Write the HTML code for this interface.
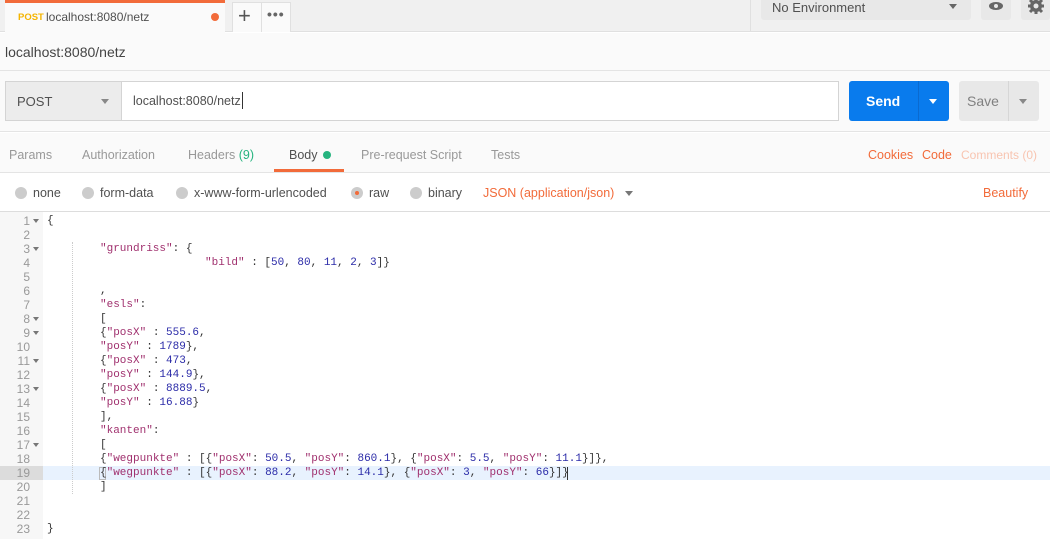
<!DOCTYPE html>
<html><head><meta charset="utf-8"><style>
*{margin:0;padding:0;box-sizing:border-box}
body{width:1050px;height:539px;overflow:hidden;background:#fff;font-family:"Liberation Sans",sans-serif;font-size:12.5px;color:#505050;position:relative}
.abs{position:absolute}
.s{color:#a0306e}.n{color:#2b2ba8}
.ln{position:absolute;left:0;width:30px;text-align:right;font-family:"Liberation Sans",sans-serif;font-size:12px;color:#999;margin-top:1px}
.cl{position:absolute;white-space:pre;font-family:"Liberation Mono",monospace;font-size:11px;color:#333;margin-top:2px}
.ar{position:absolute;left:33px;width:0;height:0;border-left:3px solid transparent;border-right:3px solid transparent;border-top:4px solid #777;margin-top:-2px}
.radio{position:absolute;top:187px;width:12px;height:12px;border-radius:50%;background:#ccc}
.tab{position:absolute;top:148px;color:#999;font-size:12.5px}
</style></head><body>
<!-- top bar -->
<div class="abs" style="left:0;top:0;width:1050px;height:32px;background:#f0f0f0;border-bottom:1px solid #e0e0e0"></div>
<div class="abs" style="left:5px;top:0;width:220px;height:33px;background:#fafafa;border-top:3px solid #f26b3a"></div>
<div class="abs" style="left:18px;top:12px;font-size:9.5px;font-weight:bold;color:#f4b400">POST</div>
<div class="abs" style="left:46px;top:10px;font-size:12px;color:#505050">localhost:8080/netz</div>
<div class="abs" style="left:211px;top:13px;width:8px;height:8px;border-radius:50%;background:#f26b3a"></div>
<div class="abs" style="left:232px;top:2px;width:59px;height:30px;background:#fafafa;border:1px solid #e0e0e0;border-bottom:none"></div>
<div class="abs" style="left:261px;top:2px;width:1px;height:30px;background:#e0e0e0"></div>
<div class="abs" style="left:238px;top:3px;font-size:22px;color:#555">+</div>
<div class="abs" style="left:267px;top:6px;font-size:14px;color:#666;letter-spacing:1px;font-weight:bold">•••</div>
<div class="abs" style="left:750px;top:0;width:1px;height:32px;background:#e0e0e0"></div>
<div class="abs" style="left:761px;top:0;width:210px;height:20px;background:#e8e8e8;border-radius:0 0 3px 3px"></div>
<div class="abs" style="left:772px;top:0;font-size:13px;color:#505050">No Environment</div>
<div class="abs" style="left:949px;top:4px;border-left:4px solid transparent;border-right:4px solid transparent;border-top:5px solid #666"></div>
<div class="abs" style="left:981px;top:0;width:30px;height:20px;background:#e8e8e8;border-radius:0 0 3px 3px"></div>
<svg class="abs" style="left:987px;top:0" width="18" height="14"><ellipse cx="9" cy="6" rx="7" ry="4" fill="#666"/><circle cx="9" cy="6" r="2" fill="#e8e8e8"/></svg>
<div class="abs" style="left:1021px;top:0;width:29px;height:20px;background:#e8e8e8;border-radius:0 0 3px 3px"></div>
<svg class="abs" style="left:1027px;top:-3px" width="18" height="18"><circle cx="9" cy="9" r="6" fill="#666"/><g stroke="#666" stroke-width="3"><line x1="9" y1="1" x2="9" y2="17"/><line x1="1" y1="9" x2="17" y2="9"/><line x1="3" y1="3" x2="15" y2="15"/><line x1="15" y1="3" x2="3" y2="15"/></g><circle cx="9" cy="9" r="2.5" fill="#e8e8e8"/></svg>
<!-- title row -->
<div class="abs" style="left:0;top:33px;width:1050px;height:38px;background:#fafafa;border-bottom:1px solid #e4e4e4"></div>
<div class="abs" style="left:5px;top:44px;font-size:14px;color:#444">localhost:8080/netz</div>
<!-- url row -->
<div class="abs" style="left:0;top:71px;width:1050px;height:61px;background:#fafafa;border-bottom:1px solid #e4e4e4"></div>
<div class="abs" style="left:5px;top:81px;width:834px;height:40px;border:1px solid #d4d4d4;background:#fff"></div>
<div class="abs" style="left:6px;top:82px;width:116px;height:38px;background:#ececec;border-right:1px solid #d4d4d4"></div>
<div class="abs" style="left:17px;top:94px;font-size:13px;color:#505050">POST</div>
<div class="abs" style="left:101px;top:99px;border-left:4px solid transparent;border-right:4px solid transparent;border-top:5px solid #888"></div>
<div class="abs" style="left:133px;top:94px;font-size:12.5px;color:#505050">localhost:8080/netz</div>
<div class="abs" style="left:242px;top:92px;width:1px;height:17px;background:#333"></div>
<div class="abs" style="left:849px;top:81px;width:100px;height:40px;background:#097bed;border-radius:3px"></div>
<div class="abs" style="left:918px;top:81px;width:1px;height:40px;background:#0a6ad0"></div>
<div class="abs" style="left:866px;top:93px;font-size:14px;font-weight:bold;color:#fff">Send</div>
<div class="abs" style="left:929px;top:99px;border-left:4px solid transparent;border-right:4px solid transparent;border-top:5px solid #fff"></div>
<div class="abs" style="left:959px;top:81px;width:80px;height:40px;background:#e8e8e8;border-radius:3px"></div>
<div class="abs" style="left:1008px;top:81px;width:1px;height:40px;background:#d6d6d6"></div>
<div class="abs" style="left:967px;top:93px;font-size:14px;color:#808080">Save</div>
<div class="abs" style="left:1019px;top:99px;border-left:4px solid transparent;border-right:4px solid transparent;border-top:5px solid #888"></div>
<!-- tabs -->
<div class="abs" style="left:0;top:133px;width:1050px;height:40px;background:#fafafa;border-bottom:1px solid #e4e4e4"></div>
<div class="tab" style="left:9px">Params</div>
<div class="tab" style="left:82px">Authorization</div>
<div class="tab" style="left:188px">Headers <span style="color:#26b47f">(9)</span></div>
<div class="tab" style="left:289px;color:#505050">Body</div>
<div class="abs" style="left:323px;top:151px;width:8px;height:8px;border-radius:50%;background:#26b47f"></div>
<div class="abs" style="left:274px;top:169px;width:70px;height:3px;background:#f26b3a"></div>
<div class="tab" style="left:361px">Pre-request Script</div>
<div class="tab" style="left:491px">Tests</div>
<div class="tab" style="left:868px;color:#f26b3a">Cookies</div>
<div class="tab" style="left:922px;color:#f26b3a">Code</div>
<div class="tab" style="left:961px;color:#f8c4b0;font-size:12px">Comments (0)</div>
<!-- radio row -->
<div class="radio" style="left:15px"></div><div class="abs" style="left:33px;top:186px">none</div>
<div class="radio" style="left:82px"></div><div class="abs" style="left:100px;top:186px">form-data</div>
<div class="radio" style="left:176px"></div><div class="abs" style="left:194px;top:186px">x-www-form-urlencoded</div>
<div class="radio" style="left:351px"></div><div class="abs" style="left:355px;top:191px;width:4px;height:4px;border-radius:50%;background:#f26b3a"></div><div class="abs" style="left:369px;top:186px">raw</div>
<div class="radio" style="left:410px"></div><div class="abs" style="left:428px;top:186px">binary</div>
<div class="abs" style="left:483px;top:186px;color:#f26b3a">JSON (application/json)</div>
<div class="abs" style="left:625px;top:191px;border-left:4px solid transparent;border-right:4px solid transparent;border-top:5px solid #777"></div>
<div class="abs" style="left:983px;top:186px;color:#f26b3a">Beautify</div>
<!-- editor -->
<div class="abs" style="left:0;top:211px;width:1050px;height:1px;background:#ddd"></div>
<div class="abs" style="left:0;top:212px;width:43px;height:327px;background:#f7f7f7"></div>
<div class="abs" style="left:43px;top:466px;width:1007px;height:14px;background:#e8f2fe"></div>
<div class="abs" style="left:0;top:466px;width:43px;height:14px;background:#dcdcdc"></div>
<div class="abs" style="left:72px;top:242px;height:252px;border-left:1px dotted #ccc"></div>
<div class="abs" style="left:99px;top:467px;width:7px;height:13px;border:1px solid #bbb"></div>
<div class="abs" style="left:567px;top:467px;width:1px;height:13px;background:#333"></div>
<div class="ln" style="top:213px">1</div><div class="ln" style="top:227px">2</div><div class="ln" style="top:241px">3</div><div class="ln" style="top:255px">4</div><div class="ln" style="top:269px">5</div><div class="ln" style="top:283px">6</div><div class="ln" style="top:297px">7</div><div class="ln" style="top:311px">8</div><div class="ln" style="top:325px">9</div><div class="ln" style="top:339px">10</div><div class="ln" style="top:353px">11</div><div class="ln" style="top:367px">12</div><div class="ln" style="top:381px">13</div><div class="ln" style="top:395px">14</div><div class="ln" style="top:409px">15</div><div class="ln" style="top:423px">16</div><div class="ln" style="top:437px">17</div><div class="ln" style="top:451px">18</div><div class="ln" style="top:465px">19</div><div class="ln" style="top:479px">20</div><div class="ln" style="top:493px">21</div><div class="ln" style="top:507px">22</div><div class="ln" style="top:521px">23</div>
<div class="ar" style="top:221px"></div><div class="ar" style="top:249px"></div><div class="ar" style="top:319px"></div><div class="ar" style="top:333px"></div><div class="ar" style="top:361px"></div><div class="ar" style="top:389px"></div><div class="ar" style="top:445px"></div>
<div class="cl" style="left:47px;top:213px">{</div>
<div class="cl" style="left:100px;top:241px"><span class="s">"grundriss"</span>: {</div>
<div class="cl" style="left:205px;top:255px"><span class="s">"bild"</span> : [<span class="n">50</span>, <span class="n">80</span>, <span class="n">11</span>, <span class="n">2</span>, <span class="n">3</span>]}</div>
<div class="cl" style="left:100px;top:283px">,</div>
<div class="cl" style="left:100px;top:297px"><span class="s">"esls"</span>:</div>
<div class="cl" style="left:100px;top:311px">[</div>
<div class="cl" style="left:100px;top:325px">{<span class="s">"posX"</span> : <span class="n">555.6</span>,</div>
<div class="cl" style="left:100px;top:339px"><span class="s">"posY"</span> : <span class="n">1789</span>},</div>
<div class="cl" style="left:100px;top:353px">{<span class="s">"posX"</span> : <span class="n">473</span>,</div>
<div class="cl" style="left:100px;top:367px"><span class="s">"posY"</span> : <span class="n">144.9</span>},</div>
<div class="cl" style="left:100px;top:381px">{<span class="s">"posX"</span> : <span class="n">8889.5</span>,</div>
<div class="cl" style="left:100px;top:395px"><span class="s">"posY"</span> : <span class="n">16.88</span>}</div>
<div class="cl" style="left:100px;top:409px">],</div>
<div class="cl" style="left:100px;top:423px"><span class="s">"kanten"</span>:</div>
<div class="cl" style="left:100px;top:437px">[</div>
<div class="cl" style="left:100px;top:451px">{<span class="s">"wegpunkte"</span> : [{<span class="s">"posX"</span>: <span class="n">50.5</span>, <span class="s">"posY"</span>: <span class="n">860.1</span>}, {<span class="s">"posX"</span>: <span class="n">5.5</span>, <span class="s">"posY"</span>: <span class="n">11.1</span>}]},</div>
<div class="cl" style="left:100px;top:465px">{<span class="s">"wegpunkte"</span> : [{<span class="s">"posX"</span>: <span class="n">88.2</span>, <span class="s">"posY"</span>: <span class="n">14.1</span>}, {<span class="s">"posX"</span>: <span class="n">3</span>, <span class="s">"posY"</span>: <span class="n">66</span>}]}</div>
<div class="cl" style="left:100px;top:479px">]</div>
<div class="cl" style="left:47px;top:521px">}</div>
</body></html>
